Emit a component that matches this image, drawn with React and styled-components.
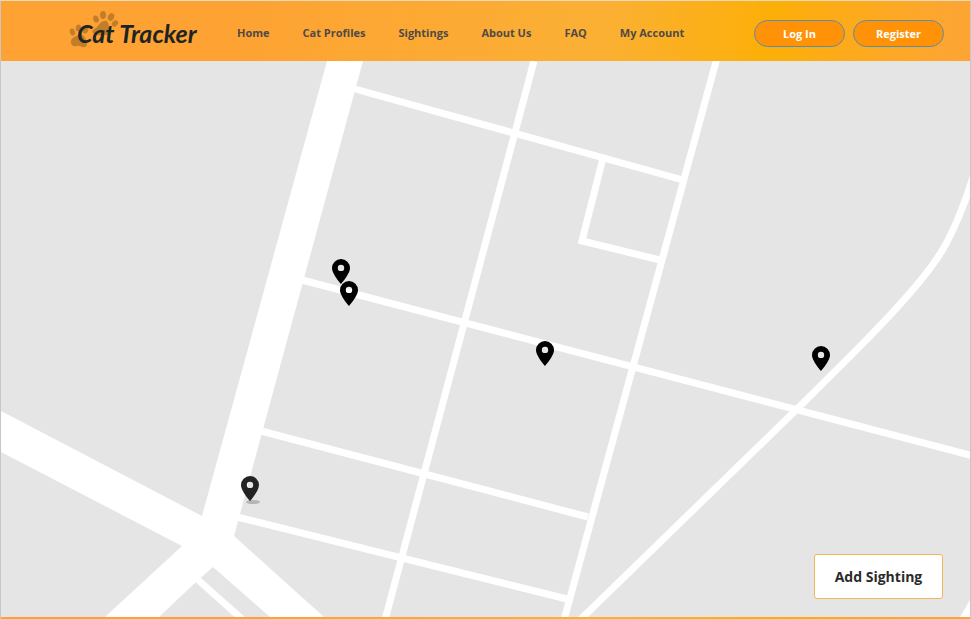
import React from "react";
import styled, { createGlobalStyle } from "styled-components";

const GlobalStyle = createGlobalStyle`
  *, *::before, *::after { box-sizing: border-box; }
  body { margin: 0; font-family: "Open Sans", "Noto Sans", sans-serif; }
`;

const sunrise =
  "linear-gradient(98deg, #fea233 0%, #fda233 24%, #fbb034 62%, #fcaf08 79%, #fda533 98%)";

const Page = styled.div`
  display: flex;
  flex-direction: column;
  min-height: 100vh;
  border: 1px solid #c9c7c2;
  border-top-color: #ecdcbc;
  border-bottom: 0;
`;

const Header = styled.header`
  display: flex;
  align-items: center;
  height: 60px;
  padding: 0 26px 0 68px;
  background: ${sunrise};
`;

const Logo = styled.a`
  position: relative;
  display: block;
  width: 132px;
  height: 40px;
  margin-right: 36px;
  color: #1d2524;
  text-decoration: none;
`;

const PawPrints = styled.svg`
  display: block;
  width: 50px;
  height: 40px;
  fill: #c27d2a;
`;

const LogoText = styled.span`
  position: absolute;
  left: 8px;
  top: 7px;
  font: italic 700 25px/30px Lato, cursive;
  white-space: nowrap;
`;

const Nav = styled.nav`
  display: flex;
  align-items: center;
  gap: 33px;
  padding-top: 4px;
`;

const NavLink = styled.a`
  color: #4f4a47;
  font-size: 11px;
  font-weight: 700;
  line-height: 16px;
  text-decoration: none;
  white-space: nowrap;
`;

const Account = styled.div`
  display: flex;
  gap: 8px;
  margin-left: auto;
  padding-top: 5px;
`;

const PillButton = styled.button`
  width: 91px;
  height: 27px;
  padding: 0;
  border: 1px solid #558fae;
  border-radius: 14px;
  background: #ff9207;
  color: #fff;
  font: 700 11px/16px "Open Sans", sans-serif;
  cursor: pointer;
`;

const MapArea = styled.main`
  position: relative;
  flex: 1;
  min-height: 320px;
  overflow: hidden;
  background: #e5e5e5;
`;

const Roads = styled.svg`
  position: absolute;
  inset: 0;
  width: 100%;
  height: 100%;
  fill: none;
  stroke: #fff;
  stroke-width: 7;
`;

const Pin = styled.button`
  position: absolute;
  left: ${(p) => p.$x}%;
  top: ${(p) => p.$y}%;
  width: 20px;
  height: 28px;
  padding: 0;
  border: 0;
  background: none;
  color: ${(p) => (p.$current ? "#232323" : "#000")};
  transform: translate(-50%, -50%);
  cursor: pointer;

  svg {
    display: block;
    width: 20px;
    height: 28px;
    overflow: visible;
  }
`;

const AddButton = styled.button`
  position: absolute;
  right: 27px;
  bottom: 18px;
  width: 129px;
  height: 45px;
  padding: 0;
  border: 1px solid #f3b45a;
  border-radius: 3px;
  background: #fff;
  color: #2b2b2b;
  font: 700 14px/20px "Open Sans", sans-serif;
  cursor: pointer;
`;

const BottomBar = styled.footer`
  height: 2px;
  background: ${sunrise};
`;

const links = ["Home", "Cat Profiles", "Sightings", "About Us", "FAQ", "My Account"];

const pins = [
  { id: 1, x: 35.1, y: 38 },
  { id: 2, x: 35.9, y: 41.9 },
  { id: 3, x: 56.1, y: 52.7 },
  { id: 4, x: 84.6, y: 53.6 },
  { id: 5, x: 25.7, y: 76.9, current: true },
];

function CatPins() {
  return pins.map((p) => (
    <Pin key={p.id} $x={p.x} $y={p.y} $current={p.current} aria-label={`Sighting ${p.id}`}>
      <svg viewBox="0 0 20 28" aria-hidden="true">
        {p.current && <ellipse cx="13" cy="27" rx="7" ry="2" fill="#b5b5b5" />}
        <path
          fill="currentColor"
          fillRule="evenodd"
          d="M10 1a9 9 0 0 0-9 9c0 6 9 16 9 16s9-10 9-16a9 9 0 0 0-9-9Zm0 5.7a3.2 3.2 0 1 1 0 6.4 3.2 3.2 0 0 1 0-6.4Z"
        />
      </svg>
    </Pin>
  ));
}

function RoadMap() {
  return (
    <Roads viewBox="1 61 969 556" preserveAspectRatio="none" aria-hidden="true">
      <g fill="#fff" stroke="none">
        <path d="M327 61H363L234 536L324 617H270L213 567L196 582L159 617H105L182 546L1 452V411L202 516Z" />
      </g>
      <path d="M355 89L683 180" />
      <path d="M534 61L385 620" />
      <path d="M717 58L564 620" />
      <path d="M603 158L582 241L660 260" />
      <path d="M302 280L973 456" />
      <path d="M261 431L588 517" />
      <path d="M237 517L567 599" />
      <path d="M196 578L243 620" />
      <path d="M974 174C965 205 951 236 943 249C918 293 833 373 797 409L580 620" />
      <path d="M960 617L970 600V617Z" fill="#fff" stroke="none" />
    </Roads>
  );
}

export default function App() {
  return (
    <>
      <GlobalStyle />
      <Page>
        <Header>
          <Logo href="#home">
            <PawPrints viewBox="69 10 50 40" aria-hidden="true">
              <ellipse cx="96" cy="18" rx="2.8" ry="3.6" transform="rotate(-20 96 18)" />
              <ellipse cx="103" cy="14" rx="3" ry="4" />
              <ellipse cx="111" cy="16" rx="3" ry="4" transform="rotate(28 111 16)" />
              <ellipse cx="115" cy="22.5" rx="2.6" ry="3.5" transform="rotate(50 115 22.5)" />
              <path d="M104 20c3-1 4 1 5 5 1 3 3 4 2 7s-5 2-8 2-8 1-10-2 2-4 4-6 3-5 7-6Z" />
              <ellipse cx="72.5" cy="31" rx="2.6" ry="3.5" transform="rotate(-15 72.5 31)" />
              <ellipse cx="78.5" cy="27" rx="2.7" ry="3.5" />
              <ellipse cx="85.5" cy="29" rx="2.7" ry="3.6" transform="rotate(25 85.5 29)" />
              <path d="M79 34c4-1 6 2 7 5s2 6-1 7-5-2-8-1-6 0-6-4 4-6 8-7Z" />
            </PawPrints>
            <LogoText>Cat Tracker</LogoText>
          </Logo>
          <Nav aria-label="Main">
            {links.map((label) => (
              <NavLink key={label} href={`#${label.toLowerCase().replace(" ", "-")}`}>
                {label}
              </NavLink>
            ))}
          </Nav>
          <Account>
            <PillButton type="button">Log In</PillButton>
            <PillButton type="button">Register</PillButton>
          </Account>
        </Header>
        <MapArea>
          <RoadMap />
          <CatPins />
          <AddButton type="button">Add Sighting</AddButton>
        </MapArea>
        <BottomBar />
      </Page>
    </>
  );
}
